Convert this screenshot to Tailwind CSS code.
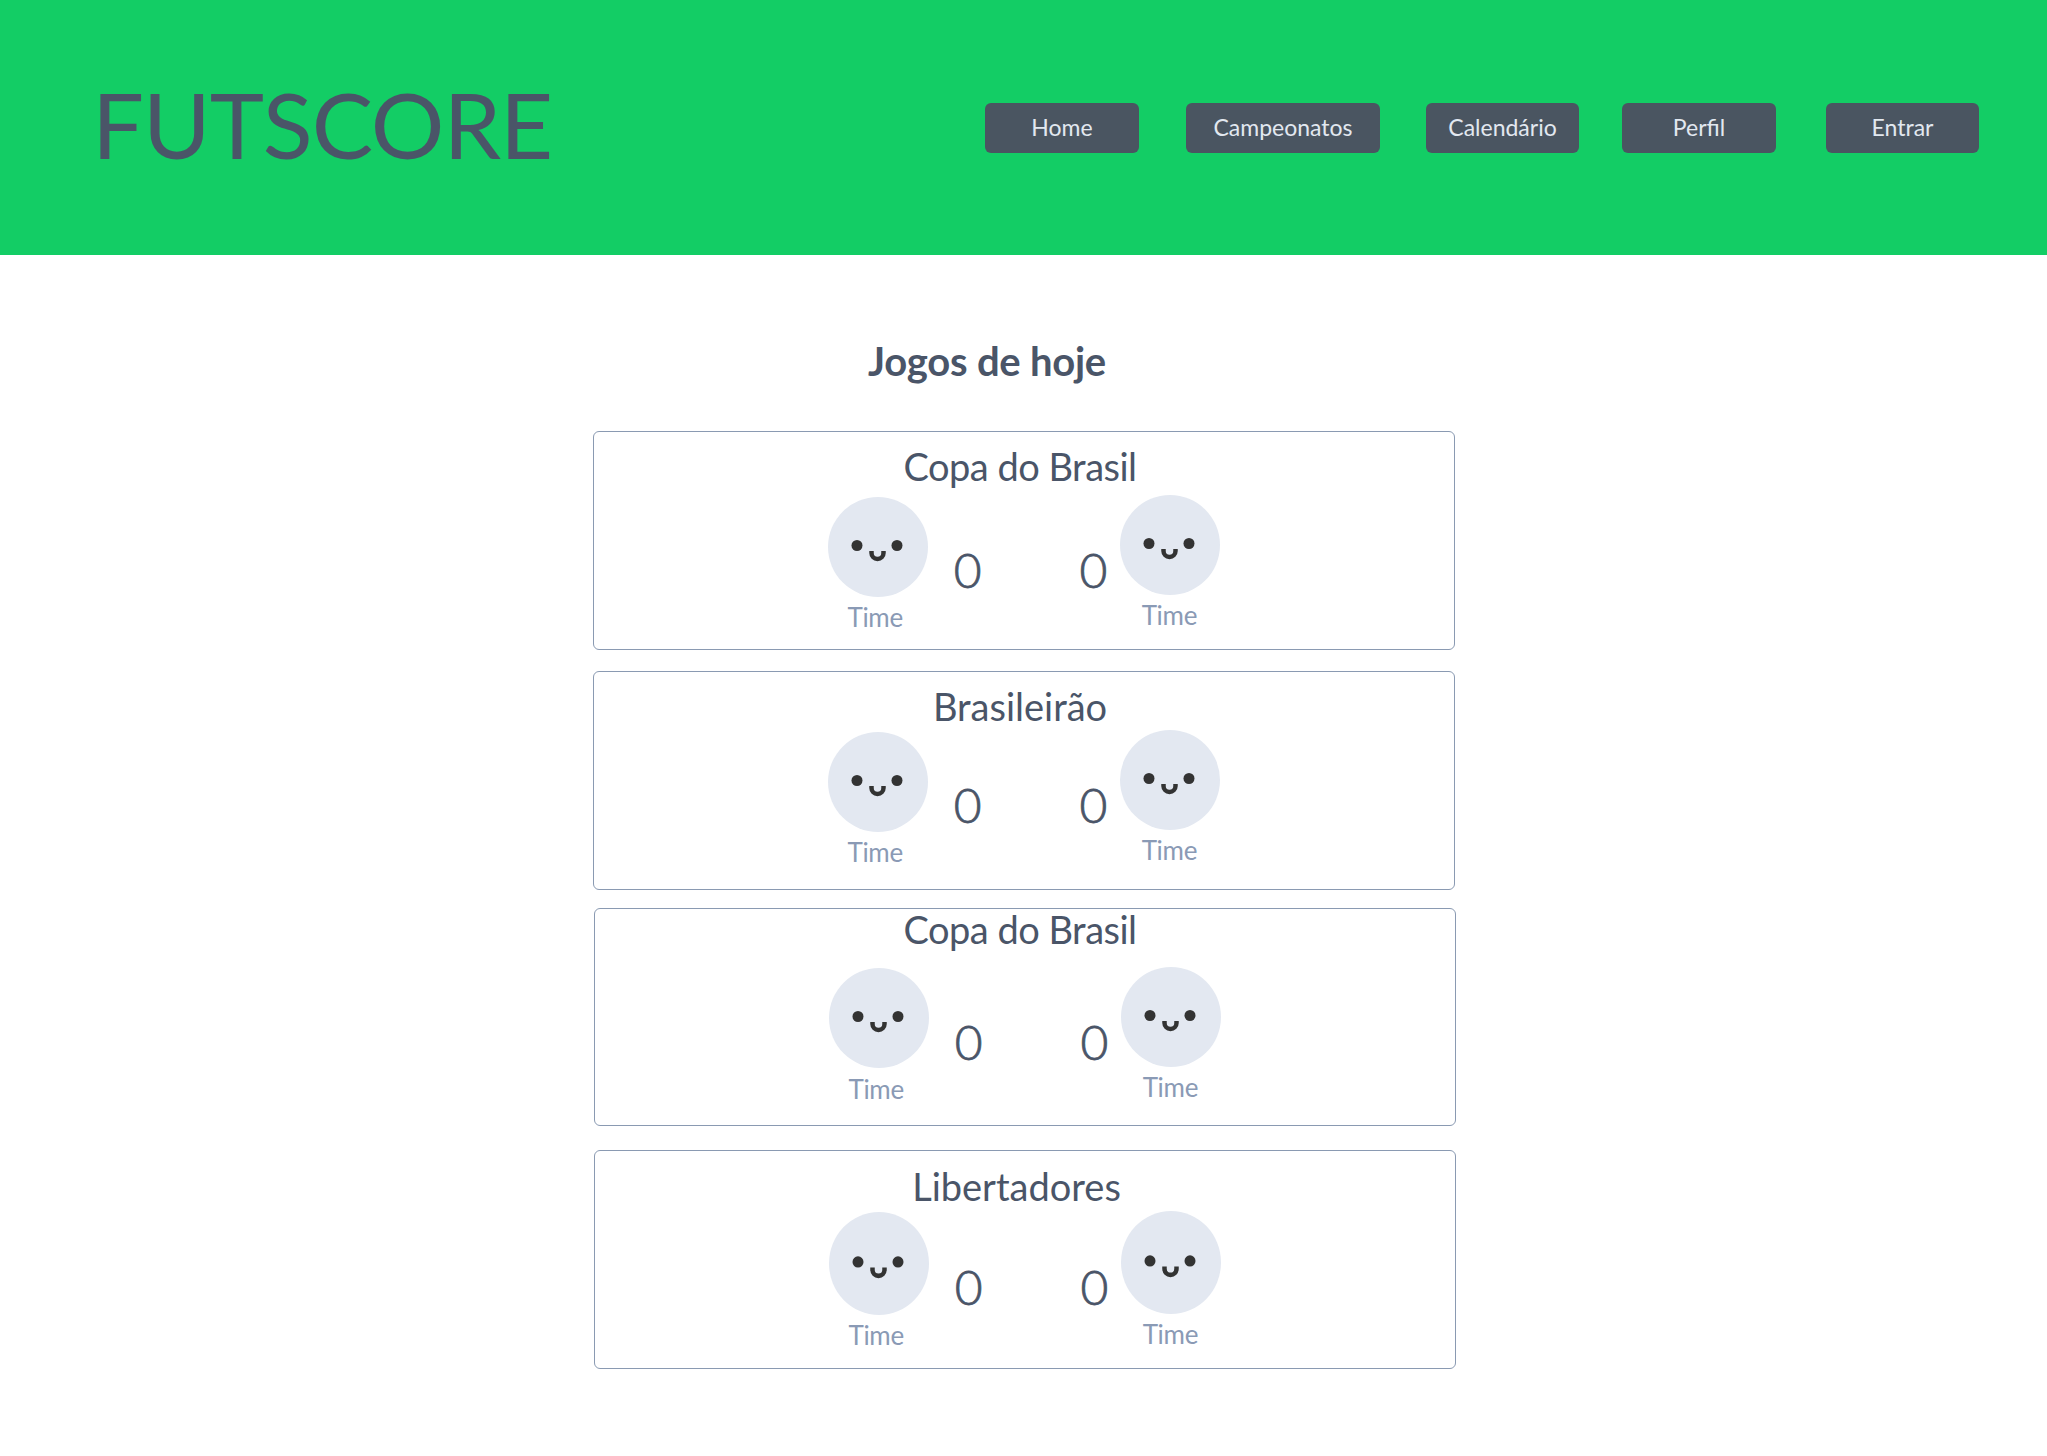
<!DOCTYPE html>
<html lang="pt-BR">
<head>
<meta charset="utf-8">
<title>Futscore</title>
<script src="https://cdn.jsdelivr.net/npm/@tailwindcss/browser@4"></script>
</head>
<body class="bg-white font-['Lato',sans-serif] text-[#4a5568]">
<header class="h-[255px] bg-[#13cd65] flex items-start">
  <div class="ml-[92px] mt-[68px] text-[92px] leading-[112px] font-normal tracking-[-1px]">FUTSCORE</div>
  <nav class="ml-auto mr-[68px] mt-[103px] flex text-[23px] text-[#e2e8f0]">
    <a class="w-[154px] h-[50px] pb-[2px] rounded-md bg-[#4a5561] flex items-center justify-center">Home</a>
    <a class="ml-[47px] w-[194px] h-[50px] pb-[2px] rounded-md bg-[#4a5561] flex items-center justify-center">Campeonatos</a>
    <a class="ml-[46px] w-[153px] h-[50px] pb-[2px] rounded-md bg-[#4a5561] flex items-center justify-center">Calendário</a>
    <a class="ml-[43px] w-[154px] h-[50px] pb-[2px] rounded-md bg-[#4a5561] flex items-center justify-center">Perfil</a>
    <a class="ml-[50px] w-[153px] h-[50px] pb-[2px] rounded-md bg-[#4a5561] flex items-center justify-center">Entrar</a>
  </nav>
</header>
<main class="flex flex-col pb-[88px]">
  <h1 class="ml-[868px] mt-[82px] h-[48px] text-[40px] leading-[48px] font-bold tracking-[-0.25px]">Jogos de hoje</h1>

  <section class="ml-[593px] mt-[46px] w-[862px] h-[219px] border border-[#8a9ab2] rounded-md flex flex-col items-center">
    <h2 class="mr-[8px] mt-[12px] h-[44px] text-[38px] leading-[44px] tracking-[-0.5px]">Copa do Brasil</h2>
    <div class="mt-[9px] flex items-start">
      <div class="w-[100px] flex flex-col items-center"><svg width="100" height="100" viewBox="0 0 100 100" preserveAspectRatio="none"><circle cx="50" cy="50" r="50" fill="#e3e8f1"/><circle cx="29" cy="48.5" r="5.5" fill="#333"/><circle cx="69" cy="48.5" r="5.5" fill="#333"/><path d="M43.5 54 v2 a6 6 0 0 0 12 0 v-2" fill="none" stroke="#333" stroke-width="4.5"/></svg><span class="mr-[5px] mt-[4px] text-[26px] leading-[32px] tracking-[-0.3px] text-[#8a9ab5]">Time</span></div>
      <span class="ml-[26px] mt-[43px] text-[48px] leading-[60px] font-light [-webkit-text-stroke:0.8px_#4a5568]">0</span>
      <span class="ml-[98px] mt-[43px] text-[48px] leading-[60px] font-light [-webkit-text-stroke:0.8px_#4a5568]">0</span>
      <div class="ml-[13px] -mt-[2px] w-[100px] flex flex-col items-center"><svg width="100" height="100" viewBox="0 0 100 100" preserveAspectRatio="none"><circle cx="50" cy="50" r="50" fill="#e3e8f1"/><circle cx="29" cy="48.5" r="5.5" fill="#333"/><circle cx="69" cy="48.5" r="5.5" fill="#333"/><path d="M43.5 54 v2 a6 6 0 0 0 12 0 v-2" fill="none" stroke="#333" stroke-width="4.5"/></svg><span class="mr-[2px] mt-[4px] text-[26px] leading-[32px] tracking-[-0.3px] text-[#8a9ab5]">Time</span></div>
    </div>
  </section>

  <section class="ml-[593px] mt-[21px] w-[862px] h-[219px] border border-[#8a9ab2] rounded-md flex flex-col items-center">
    <h2 class="mr-[8px] mt-[12px] h-[44px] text-[38px] leading-[44px]">Brasileirão</h2>
    <div class="mt-[4px] flex items-start">
      <div class="w-[100px] flex flex-col items-center"><svg width="100" height="100" viewBox="0 0 100 100" preserveAspectRatio="none"><circle cx="50" cy="50" r="50" fill="#e3e8f1"/><circle cx="29" cy="48.5" r="5.5" fill="#333"/><circle cx="69" cy="48.5" r="5.5" fill="#333"/><path d="M43.5 54 v2 a6 6 0 0 0 12 0 v-2" fill="none" stroke="#333" stroke-width="4.5"/></svg><span class="mr-[5px] mt-[4px] text-[26px] leading-[32px] tracking-[-0.3px] text-[#8a9ab5]">Time</span></div>
      <span class="ml-[26px] mt-[43px] text-[48px] leading-[60px] font-light [-webkit-text-stroke:0.8px_#4a5568]">0</span>
      <span class="ml-[98px] mt-[43px] text-[48px] leading-[60px] font-light [-webkit-text-stroke:0.8px_#4a5568]">0</span>
      <div class="ml-[13px] -mt-[2px] w-[100px] flex flex-col items-center"><svg width="100" height="100" viewBox="0 0 100 100" preserveAspectRatio="none"><circle cx="50" cy="50" r="50" fill="#e3e8f1"/><circle cx="29" cy="48.5" r="5.5" fill="#333"/><circle cx="69" cy="48.5" r="5.5" fill="#333"/><path d="M43.5 54 v2 a6 6 0 0 0 12 0 v-2" fill="none" stroke="#333" stroke-width="4.5"/></svg><span class="mr-[2px] mt-[4px] text-[26px] leading-[32px] tracking-[-0.3px] text-[#8a9ab5]">Time</span></div>
    </div>
  </section>

  <section class="ml-[594px] mt-[18px] w-[862px] h-[218px] border border-[#8a9ab2] rounded-md flex flex-col items-center">
    <h2 class="mr-[10px] -mt-[2px] h-[44px] text-[38px] leading-[44px] tracking-[-0.5px]">Copa do Brasil</h2>
    <div class="mt-[17px] flex items-start">
      <div class="w-[100px] flex flex-col items-center"><svg width="100" height="100" viewBox="0 0 100 100" preserveAspectRatio="none"><circle cx="50" cy="50" r="50" fill="#e3e8f1"/><circle cx="29" cy="48.5" r="5.5" fill="#333"/><circle cx="69" cy="48.5" r="5.5" fill="#333"/><path d="M43.5 54 v2 a6 6 0 0 0 12 0 v-2" fill="none" stroke="#333" stroke-width="4.5"/></svg><span class="mr-[5px] mt-[5px] text-[26px] leading-[32px] tracking-[-0.3px] text-[#8a9ab5]">Time</span></div>
      <span class="ml-[26px] mt-[44px] text-[48px] leading-[60px] font-light [-webkit-text-stroke:0.8px_#4a5568]">0</span>
      <span class="ml-[98px] mt-[44px] text-[48px] leading-[60px] font-light [-webkit-text-stroke:0.8px_#4a5568]">0</span>
      <div class="ml-[13px] -mt-[1px] w-[100px] flex flex-col items-center"><svg width="100" height="100" viewBox="0 0 100 100" preserveAspectRatio="none"><circle cx="50" cy="50" r="50" fill="#e3e8f1"/><circle cx="29" cy="48.5" r="5.5" fill="#333"/><circle cx="69" cy="48.5" r="5.5" fill="#333"/><path d="M43.5 54 v2 a6 6 0 0 0 12 0 v-2" fill="none" stroke="#333" stroke-width="4.5"/></svg><span class="mr-[2px] mt-[4px] text-[26px] leading-[32px] tracking-[-0.3px] text-[#8a9ab5]">Time</span></div>
    </div>
  </section>

  <section class="ml-[594px] mt-[24px] w-[862px] h-[219px] border border-[#8a9ab2] rounded-md flex flex-col items-center">
    <h2 class="mr-[17px] mt-[13px] h-[44px] text-[38px] leading-[44px]">Libertadores</h2>
    <div class="mt-[4px] flex items-start">
      <div class="w-[100px] flex flex-col items-center"><svg width="100" height="103" viewBox="0 0 100 100" preserveAspectRatio="none"><circle cx="50" cy="50" r="50" fill="#e3e8f1"/><circle cx="29" cy="48.5" r="5.5" fill="#333"/><circle cx="69" cy="48.5" r="5.5" fill="#333"/><path d="M43.5 54 v2 a6 6 0 0 0 12 0 v-2" fill="none" stroke="#333" stroke-width="4.5"/></svg><span class="mr-[5px] mt-[4px] text-[26px] leading-[32px] tracking-[-0.3px] text-[#8a9ab5]">Time</span></div>
      <span class="ml-[26px] mt-[45px] text-[48px] leading-[60px] font-light [-webkit-text-stroke:0.8px_#4a5568]">0</span>
      <span class="ml-[98px] mt-[45px] text-[48px] leading-[60px] font-light [-webkit-text-stroke:0.8px_#4a5568]">0</span>
      <div class="ml-[13px] -mt-[1px] w-[100px] flex flex-col items-center"><svg width="100" height="103" viewBox="0 0 100 100" preserveAspectRatio="none"><circle cx="50" cy="50" r="50" fill="#e3e8f1"/><circle cx="29" cy="48.5" r="5.5" fill="#333"/><circle cx="69" cy="48.5" r="5.5" fill="#333"/><path d="M43.5 54 v2 a6 6 0 0 0 12 0 v-2" fill="none" stroke="#333" stroke-width="4.5"/></svg><span class="mr-[2px] mt-[4px] text-[26px] leading-[32px] tracking-[-0.3px] text-[#8a9ab5]">Time</span></div>
    </div>
  </section>
</main>
</body>
</html>
